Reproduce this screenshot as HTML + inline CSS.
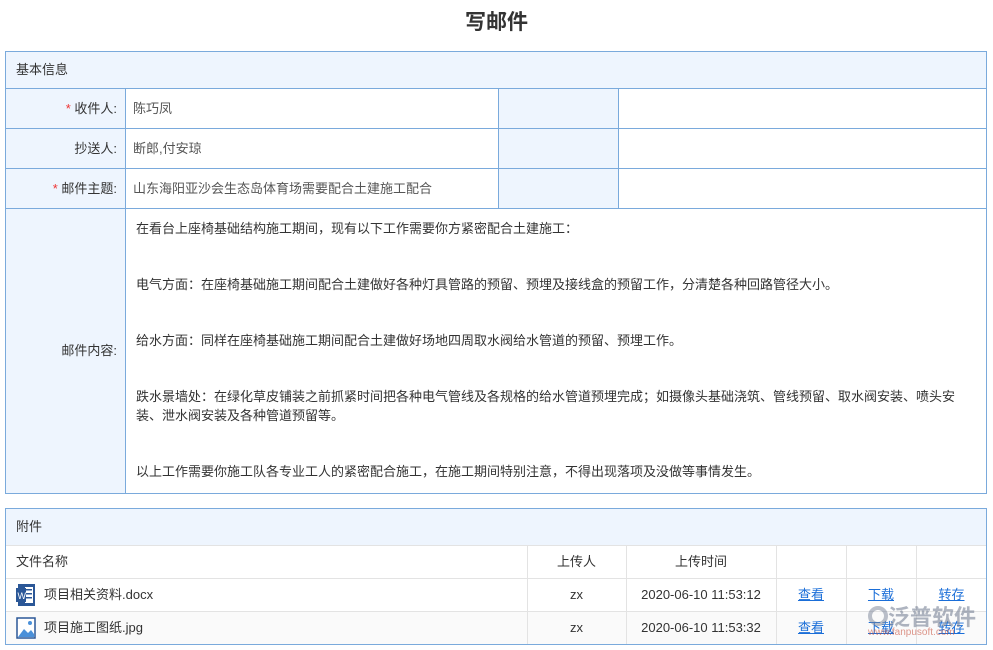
<!DOCTYPE html>
<html><head><meta charset="utf-8"><style>
*{margin:0;padding:0;box-sizing:border-box}
body{width:993px;height:650px;background:#fff;font-family:"Liberation Sans","Noto Sans CJK SC",sans-serif;font-size:13px;color:#333;position:relative;overflow:hidden}
.a{position:absolute}
.t{left:0;width:993px;top:6px;text-align:center;font-size:21px;font-weight:bold;color:#333}
.bx{border:1px solid #7aaadc}
.hd{background:#eef5fe}
.lb{background:#eef5fe;text-align:right;padding-right:8px}
.v{padding-left:7px;color:#555}
.ln{background:#7aaadc}
.g{background:#e3e3e3}
.st{color:#e33}
a{color:#1a6ed8;text-decoration:underline}
</style></head><body>
<div class="a t">写邮件</div>

<div class="a bx" style="left:5px;top:51px;width:982px;height:443px"></div>
<div class="a hd" style="left:6px;top:52px;width:980px;height:36px;line-height:36px;padding-left:10px">基本信息</div>
<div class="a hd" style="left:499px;top:89px;width:119px;height:119px"></div>
<div class="a lb" style="left:6px;top:89px;width:119px;height:39px;line-height:39px"><span class="st">* </span>收件人:</div>
<div class="a lb" style="left:6px;top:129px;width:119px;height:39px;line-height:39px">抄送人:</div>
<div class="a lb" style="left:6px;top:169px;width:119px;height:39px;line-height:39px"><span class="st">* </span>邮件主题:</div>
<div class="a lb" style="left:6px;top:209px;width:119px;height:284px;line-height:284px">邮件内容:</div>
<div class="a ln" style="left:6px;top:88px;width:980px;height:1px"></div>
<div class="a ln" style="left:6px;top:128px;width:980px;height:1px"></div>
<div class="a ln" style="left:6px;top:168px;width:980px;height:1px"></div>
<div class="a ln" style="left:6px;top:208px;width:980px;height:1px"></div>
<div class="a ln" style="left:125px;top:89px;width:1px;height:404px"></div>
<div class="a ln" style="left:498px;top:89px;width:1px;height:119px"></div>
<div class="a ln" style="left:618px;top:89px;width:1px;height:119px"></div>
<div class="a v" style="left:126px;top:89px;height:39px;line-height:39px">陈巧凤</div>
<div class="a v" style="left:126px;top:129px;height:39px;line-height:39px">断郎,付安琼</div>
<div class="a v" style="left:126px;top:169px;height:39px;line-height:39px">山东海阳亚沙会生态岛体育场需要配合土建施工配合</div>
<div class="a" style="left:136px;top:219px;width:830px;line-height:19px;color:#333">
<div>在看台上座椅基础结构施工期间，现有以下工作需要你方紧密配合土建施工：</div>
<div style="margin-top:37px">电气方面：在座椅基础施工期间配合土建做好各种灯具管路的预留、预埋及接线盒的预留工作，分清楚各种回路管径大小。</div>
<div style="margin-top:37px">给水方面：同样在座椅基础施工期间配合土建做好场地四周取水阀给水管道的预留、预埋工作。</div>
<div style="margin-top:37px">跌水景墙处：在绿化草皮铺装之前抓紧时间把各种电气管线及各规格的给水管道预埋完成；如摄像头基础浇筑、管线预留、取水阀安装、喷头安装、泄水阀安装及各种管道预留等。</div>
<div style="margin-top:37px">以上工作需要你施工队各专业工人的紧密配合施工，在施工期间特别注意，不得出现落项及没做等事情发生。</div>
</div>

<div class="a bx" style="left:5px;top:508px;width:982px;height:137px"></div>
<div class="a hd" style="left:6px;top:509px;width:980px;height:36px;line-height:36px;padding-left:10px">附件</div>
<div class="a g" style="left:6px;top:545px;width:980px;height:1px"></div>
<div class="a g" style="left:6px;top:578px;width:980px;height:1px"></div>
<div class="a g" style="left:6px;top:611px;width:980px;height:1px"></div>
<div class="a" style="left:6px;top:612px;width:980px;height:32px;background:#fafafa"></div>
<div class="a g" style="left:527px;top:546px;width:1px;height:98px"></div>
<div class="a g" style="left:626px;top:546px;width:1px;height:98px"></div>
<div class="a g" style="left:776px;top:546px;width:1px;height:98px"></div>
<div class="a g" style="left:846px;top:546px;width:1px;height:98px"></div>
<div class="a g" style="left:916px;top:546px;width:1px;height:98px"></div>
<div class="a" style="left:16px;top:546px;line-height:32px">文件名称</div>
<div class="a" style="left:527px;top:546px;width:99px;text-align:center;line-height:32px">上传人</div>
<div class="a" style="left:626px;top:546px;width:150px;text-align:center;line-height:32px">上传时间</div>
<svg class="a" style="left:16px;top:584px" width="20" height="22"><rect x="2" y="0" width="17" height="22" fill="#2b5797"/><rect x="9" y="3" width="8" height="16" fill="#fff"/><rect x="10" y="5" width="6" height="1.5" fill="#2b5797"/><rect x="10" y="9" width="6" height="1.5" fill="#2b5797"/><rect x="10" y="13" width="6" height="1.5" fill="#2b5797"/><rect x="0" y="4" width="10" height="14" fill="#2b5797"/><text x="1.5" y="15" font-size="9" fill="#fff" font-family="Liberation Sans">W</text></svg>
<div class="a" style="left:44px;top:579px;line-height:32px">项目相关资料.docx</div>
<div class="a" style="left:527px;top:579px;width:99px;text-align:center;line-height:32px">zx</div>
<div class="a" style="left:626px;top:579px;width:150px;text-align:center;line-height:32px">2020-06-10 11:53:12</div>
<div class="a" style="left:776px;top:579px;width:70px;text-align:center;line-height:32px"><a>查看</a></div>
<div class="a" style="left:846px;top:579px;width:70px;text-align:center;line-height:32px"><a>下载</a></div>
<div class="a" style="left:916px;top:579px;width:71px;text-align:center;line-height:32px"><a>转存</a></div>
<svg class="a" style="left:16px;top:617px" width="20" height="22"><rect x="1" y="1" width="18" height="20" fill="#fff" stroke="#2b5797" stroke-width="1.5"/><path d="M2 20 L8 12 L12 16 L15 13 L18 17 L18 20Z" fill="#4a90d9"/><circle cx="14" cy="6" r="2" fill="#4a90d9"/></svg>
<div class="a" style="left:44px;top:612px;line-height:32px">项目施工图纸.jpg</div>
<div class="a" style="left:527px;top:612px;width:99px;text-align:center;line-height:32px">zx</div>
<div class="a" style="left:626px;top:612px;width:150px;text-align:center;line-height:32px">2020-06-10 11:53:32</div>
<div class="a" style="left:776px;top:612px;width:70px;text-align:center;line-height:32px"><a>查看</a></div>
<div class="a" style="left:846px;top:612px;width:70px;text-align:center;line-height:32px"><a>下载</a></div>
<div class="a" style="left:916px;top:612px;width:71px;text-align:center;line-height:32px"><a>转存</a></div>
<div class="a" style="left:888px;top:600px;font-size:22px;color:rgba(120,130,150,.6);font-weight:bold">泛普软件</div>
<div class="a" style="left:868px;top:606px;width:20px;height:20px;border-radius:50%;border:4px solid rgba(120,130,150,.5)"></div>
<div class="a" style="left:868px;top:627px;font-size:10px;color:rgba(200,80,60,.6)">www.fanpusoft.com</div>
</body></html>
